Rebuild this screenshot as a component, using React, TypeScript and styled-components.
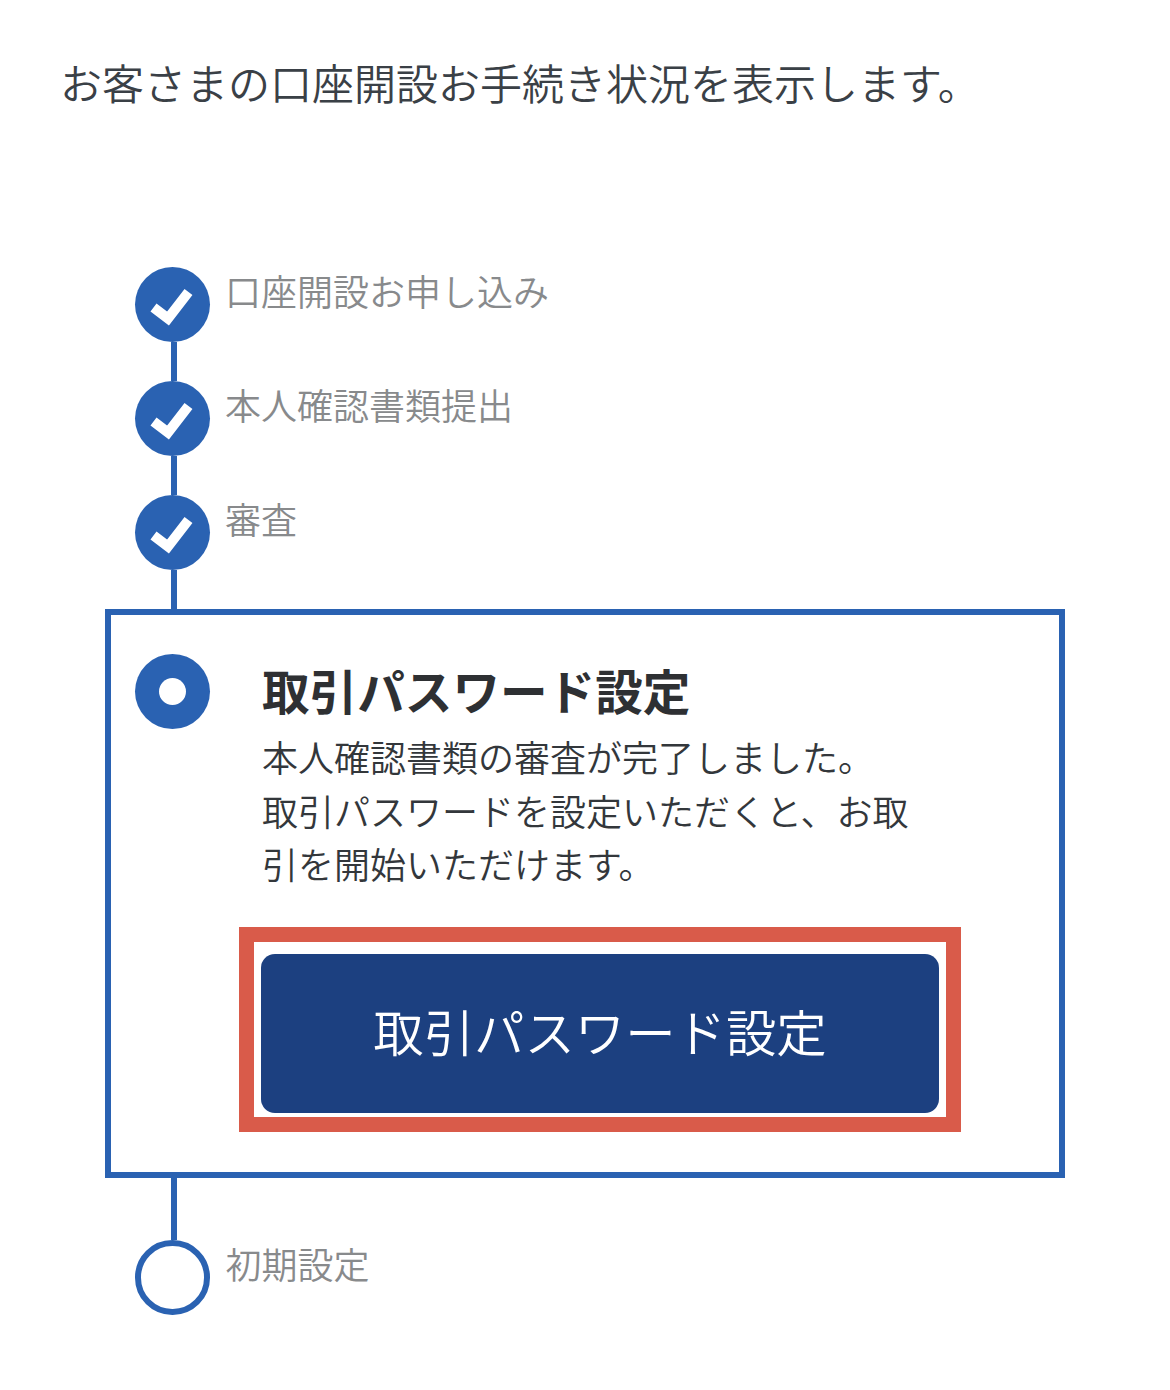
import React from "react";
import styled, { createGlobalStyle } from "styled-components";

const Global = createGlobalStyle`
  html, body { margin: 0; padding: 0; background: #fff; }
  body { font-family: "Noto Sans CJK JP", "Noto Sans", sans-serif; }
`;

const BLUE = "#2a62b2";

const Page = styled.main`
  width: 1170px;
  height: 1390px;
  overflow: hidden;
  box-sizing: border-box;
  padding: 52px 105px 0;
  background: #fff;
`;

const Intro = styled.p`
  margin: 0 0 155px -45px;
  font-size: 42px;
  line-height: 60px;
  font-weight: 350;
  color: #3a4046;
  white-space: nowrap;
`;

const Row = styled.div`
  display: flex;
  align-items: flex-start;
  gap: 15px;
  padding-left: 30px;
`;

const Marker = styled.div`
  display: flex;
  flex-direction: column;
  width: 75px;
  flex: none;
`;

const Dot = styled.div`
  width: ${(p) => (p.$hollow ? 74.5 : 75)}px;
  height: ${(p) => (p.$hollow ? 74.5 : 75)}px;
  margin-right: ${(p) => (p.$hollow ? 1 : 0)}px;
  flex: none;
  box-sizing: border-box;
  border-radius: 50%;
  display: flex;
  align-items: center;
  justify-content: center;
  background: ${(p) => (p.$hollow ? "#fff" : BLUE)};
  border: ${(p) => (p.$hollow ? `6px solid ${BLUE}` : "none")};
`;

const Pip = styled.span`
  width: 27px;
  height: 27px;
  border-radius: 50%;
  background: #fff;
`;

const Connector = styled.div`
  width: 6px;
  height: ${(p) => p.$h}px;
  margin-left: ${(p) => p.$x}px;
  background: ${BLUE};
`;

const Label = styled.div`
  font-size: 36px;
  line-height: 46px;
  font-weight: 350;
  color: #888a8c;
  white-space: nowrap;
`;

const ActiveBox = styled.section`
  box-sizing: border-box;
  width: 960px;
  height: 569px;
  border: 6px solid ${BLUE};
  padding: 39px 0 0 24px;
  display: flex;
  align-items: flex-start;
  gap: 52px;
`;

const ActiveBody = styled.div`
  display: flex;
  flex-direction: column;
  flex: none;
  width: 700px;
`;

const Title = styled.h2`
  margin: 2px 0 0;
  font-size: 47.6px;
  line-height: 68px;
  font-weight: 700;
  color: #2e3033;
  white-space: nowrap;
`;

const Desc = styled.p`
  margin: 6px 0 0;
  font-size: 36px;
  line-height: 53.5px;
  font-weight: 350;
  color: #33373b;
  white-space: nowrap;
`;

const Highlight = styled.div`
  box-sizing: border-box;
  width: 722px;
  height: 205px;
  margin: 36px 0 0 -23px;
  border: 15px solid #d95b4a;
  padding: 12px 7px 4px;
  display: flex;
  background: #fff;
`;

const ActionButton = styled.button`
  flex: 1;
  border: 0;
  border-radius: 14px;
  background: #1c4080;
  color: #fff;
  font-family: inherit;
  font-size: 50.4px;
  font-weight: 350;
  white-space: nowrap;
  padding: 0 0 6px;
`;

const CheckSvg = styled.svg`
  display: block;
  filter: blur(0.7px);
`;

const Check = () => (
  <CheckSvg width="75" height="75" viewBox="0 0 75 75" aria-hidden="true">
    <path d="M18.5 40.5 L33 51.5 L53.5 25" fill="none" stroke="#fff" strokeWidth="10" />
  </CheckSvg>
);

const done = ["口座開設お申し込み", "本人確認書類提出", "審査"];

export default function App() {
  return (
    <>
      <Global />
      <Page>
        <Intro>お客さまの口座開設お手続き状況を表示します。</Intro>
        {done.map((t) => (
          <Row key={t}>
            <Marker>
              <Dot>
                <Check />
              </Dot>
              <Connector $h={39} $x={36} />
            </Marker>
            <Label>{t}</Label>
          </Row>
        ))}
        <ActiveBox>
          <Dot>
            <Pip />
          </Dot>
          <ActiveBody>
            <Title>取引パスワード設定</Title>
            <Desc>
              本人確認書類の審査が完了しました。
              <br />
              取引パスワードを設定いただくと、お取
              <br />
              引を開始いただけます。
            </Desc>
            <Highlight>
              <ActionButton>取引パスワード設定</ActionButton>
            </Highlight>
          </ActiveBody>
        </ActiveBox>
        <Connector $h={62} $x={66} />
        <Row>
          <Dot $hollow />
          <Label>初期設定</Label>
        </Row>
      </Page>
    </>
  );
}
